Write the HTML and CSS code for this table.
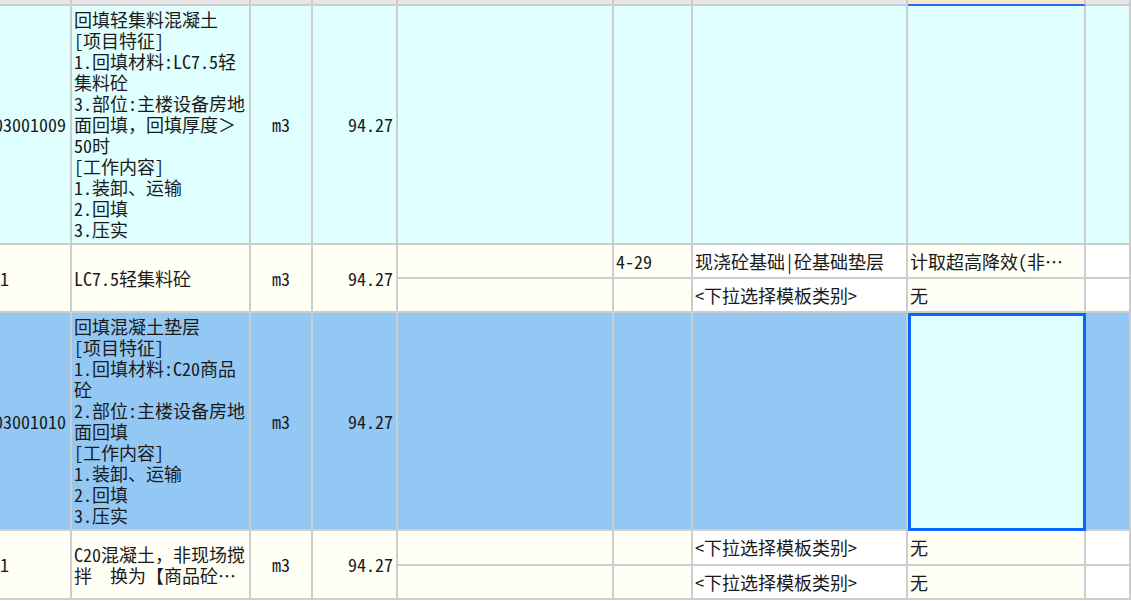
FILE: index.html
```html
<!DOCTYPE html>
<html lang="zh-CN">
<head>
<meta charset="utf-8">
<title>清单</title>
<link rel="stylesheet" href="styles.css">
</head>
<body>
<div class="sheet">
  <!-- header strip -->
  <div class="c h"></div><div class="c h"></div><div class="c h"></div><div class="c h"></div><div class="c h"></div><div class="c h"></div><div class="c h"></div><div class="c h hsel"></div><div class="c h"></div>

  <!-- row 1 -->
  <div class="c cy code"><span>03001009</span></div>
  <div class="c cy desc"><div>回填轻集料混凝土<br>[项目特征]<br>1.回填材料:LC7.5轻<br>集料砼<br>3.部位:主楼设备房地<br>面回填，回填厚度＞<br>50时<br>[工作内容]<br>1.装卸、运输<br>2.回填<br>3.压实</div></div>
  <div class="c cy unit">m3</div>
  <div class="c cy qty">94.27</div>
  <div class="c cy"></div><div class="c cy"></div><div class="c cy"></div><div class="c cy"></div><div class="c cy"></div>

  <!-- row 2 / 3 -->
  <div class="c iv sub subcode"><span>-1</span></div>
  <div class="c iv sub desc"><div>LC7.5轻集料砼</div></div>
  <div class="c iv sub unit">m3</div>
  <div class="c iv sub qty">94.27</div>
  <div class="c iv"></div>
  <div class="c iv txt">4-29</div>
  <div class="c wh txt">现浇砼基础|砼基础垫层</div>
  <div class="c iv txt">计取超高降效(非…</div>
  <div class="c wh"></div>

  <div class="c iv"></div>
  <div class="c iv"></div>
  <div class="c wh txt">&lt;下拉选择模板类别&gt;</div>
  <div class="c iv txt">无</div>
  <div class="c wh"></div>

  <!-- row 4 (selected) -->
  <div class="c bl code"><span>03001010</span></div>
  <div class="c bl desc"><div>回填混凝土垫层<br>[项目特征]<br>1.回填材料:C20商品<br>砼<br>2.部位:主楼设备房地<br>面回填<br>[工作内容]<br>1.装卸、运输<br>2.回填<br>3.压实</div></div>
  <div class="c bl unit">m3</div>
  <div class="c bl qty">94.27</div>
  <div class="c bl"></div><div class="c bl"></div><div class="c bl"></div>
  <div class="c cy focus"></div>
  <div class="c bl"></div>

  <!-- row 5 / 6 -->
  <div class="c iv sub subcode"><span>-1</span></div>
  <div class="c iv sub desc"><div>C20混凝土，非现场搅<br>拌&nbsp;&nbsp;换为【商品砼…</div></div>
  <div class="c iv sub unit">m3</div>
  <div class="c iv sub qty">94.27</div>
  <div class="c iv"></div>
  <div class="c iv"></div>
  <div class="c wh txt">&lt;下拉选择模板类别&gt;</div>
  <div class="c iv txt">无</div>
  <div class="c wh"></div>

  <div class="c iv"></div>
  <div class="c iv"></div>
  <div class="c wh txt">&lt;下拉选择模板类别&gt;</div>
  <div class="c iv txt">无</div>
  <div class="c wh"></div>
</div>
</body>
</html>
```

FILE: styles.css
```css
html, body {
  margin: 0;
  padding: 0;
  background: #ffffff;
}

body {
  font-family: "Noto Sans Mono CJK SC", "Noto Sans CJK SC", "DejaVu Sans Mono", monospace;
  font-size: 18px;
  line-height: 21px;
  color: #1a1a1a;
  overflow: hidden;
}

.sheet {
  display: grid;
  grid-template-columns: 72px 179px 62px 85px 216px 79px 215px 178px 1fr;
  grid-template-rows: 6px 239px 34px 34px 218px 35px 34px;
}

.c {
  box-sizing: border-box;
  border-right: 2px solid #cdcdcd;
  border-bottom: 2px solid #cdcdcd;
  overflow: hidden;
  display: flex;
  align-items: center;
  white-space: nowrap;
  min-width: 0;
}

.h {
  background: #e7e7e7;
}

.hsel {
  background: #fde6c8;
  border-bottom-color: #1f6ff5;
}

.cy { background: #e0ffff; }
.iv { background: #fffff5; }
.wh { background: #ffffff; }
.bl { background: #93c8f5; }

.sub {
  grid-row: span 2;
}

.code {
  justify-content: flex-end;
  padding-right: 4px;
}

.subcode span {
  margin-left: -9px;
}

.desc {
  padding-left: 2px;
}

.unit {
  justify-content: center;
}

.qty {
  justify-content: flex-end;
  padding-right: 3px;
}

.txt {
  padding-left: 2px;
}

.focus {
  outline: 3px solid #0a66ff;
  outline-offset: -3px;
}
```
